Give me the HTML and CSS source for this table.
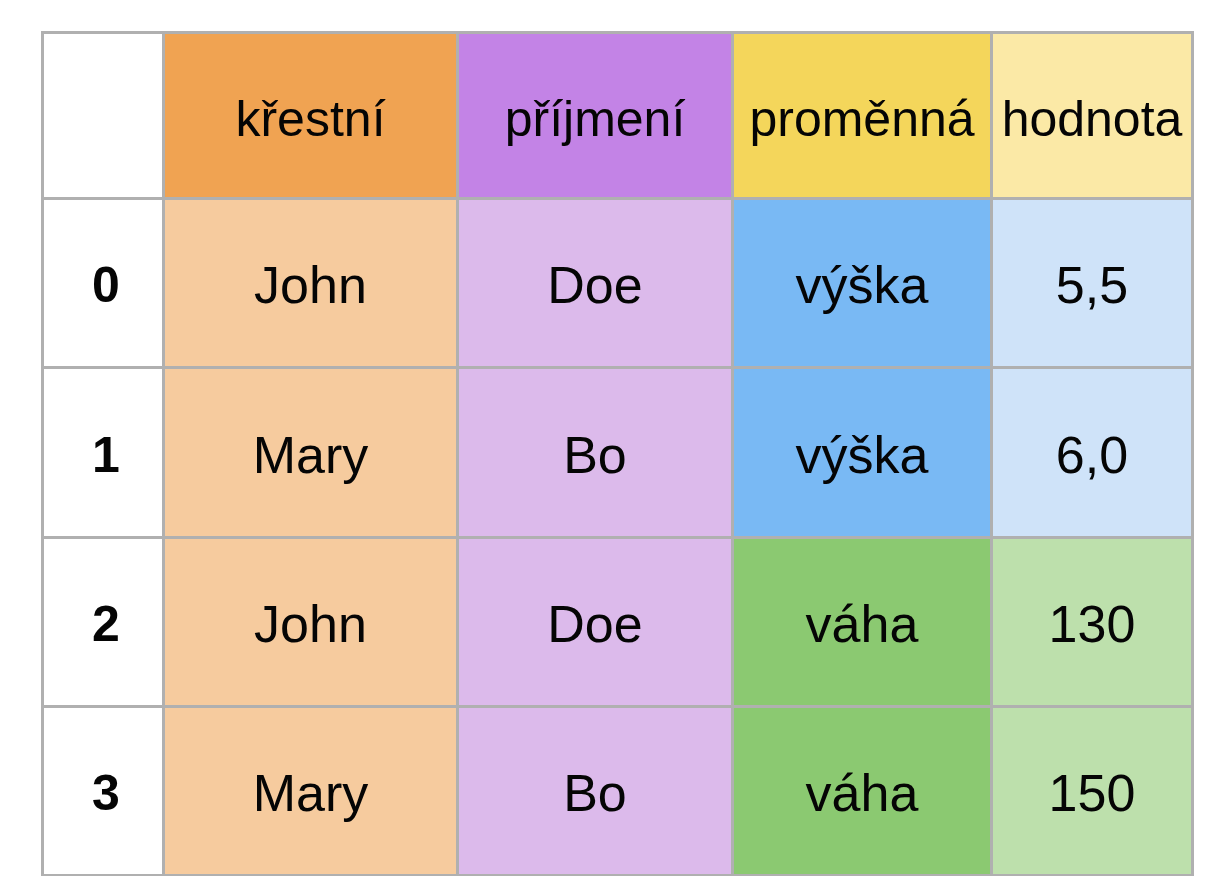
FILE: index.html
```html
<!DOCTYPE html>
<html lang="cs">
<head>
<meta charset="utf-8">
<title>Tabulka</title>
<link rel="stylesheet" href="styles.css">
</head>
<body>
<div class="table">
  <div class="cell idx"></div>
  <div class="cell head c-first">křestní</div>
  <div class="cell head c-last">příjmení</div>
  <div class="cell head c-var">proměnná</div>
  <div class="cell head c-val">hodnota</div>

  <div class="cell idx">0</div>
  <div class="cell b-first">John</div>
  <div class="cell b-last">Doe</div>
  <div class="cell b-blue">výška</div>
  <div class="cell b-lblue">5,5</div>

  <div class="cell idx">1</div>
  <div class="cell b-first">Mary</div>
  <div class="cell b-last">Bo</div>
  <div class="cell b-blue">výška</div>
  <div class="cell b-lblue">6,0</div>

  <div class="cell idx">2</div>
  <div class="cell b-first">John</div>
  <div class="cell b-last">Doe</div>
  <div class="cell b-green">váha</div>
  <div class="cell b-lgreen">130</div>

  <div class="cell idx">3</div>
  <div class="cell b-first">Mary</div>
  <div class="cell b-last">Bo</div>
  <div class="cell b-green">váha</div>
  <div class="cell b-lgreen">150</div>
</div>
</body>
</html>
```
FILE: styles.css
```css
html, body {
  margin: 0;
  padding: 0;
  background: #ffffff;
}
body {
  padding: 31px 0 0 41px;
  font-family: "Liberation Sans", Arial, sans-serif;
  color: #050505;
}
.table {
  display: grid;
  grid-template-columns: 118px 291px 272px 256px 198px;
  grid-template-rows: 163px 166px 167px 166px 166px;
  gap: 3px;
  padding: 3px;
  background: #b0b0b0;
  width: max-content;
}
.cell {
  display: flex;
  align-items: center;
  justify-content: center;
  font-size: 52px;
  line-height: 1;
  padding-top: 4px;
}
.head { font-size: 50px; padding-top: 6px; }
.idx {
  background: #ffffff;
  font-weight: bold;
  font-size: 50px;
  padding-left: 6px;
}
.c-first { background: #f0a352; }
.c-last { background: #c383e6; }
.c-var { background: #f4d65b; }
.c-val { background: #fbe9a6; }
.b-first { background: #f6cb9e; }
.b-last { background: #dcbaeb; }
.b-blue { background: #79b9f4; }
.b-lblue { background: #cfe3f9; }
.b-green { background: #8bc971; }
.b-lgreen { background: #bde0ac; }
```
